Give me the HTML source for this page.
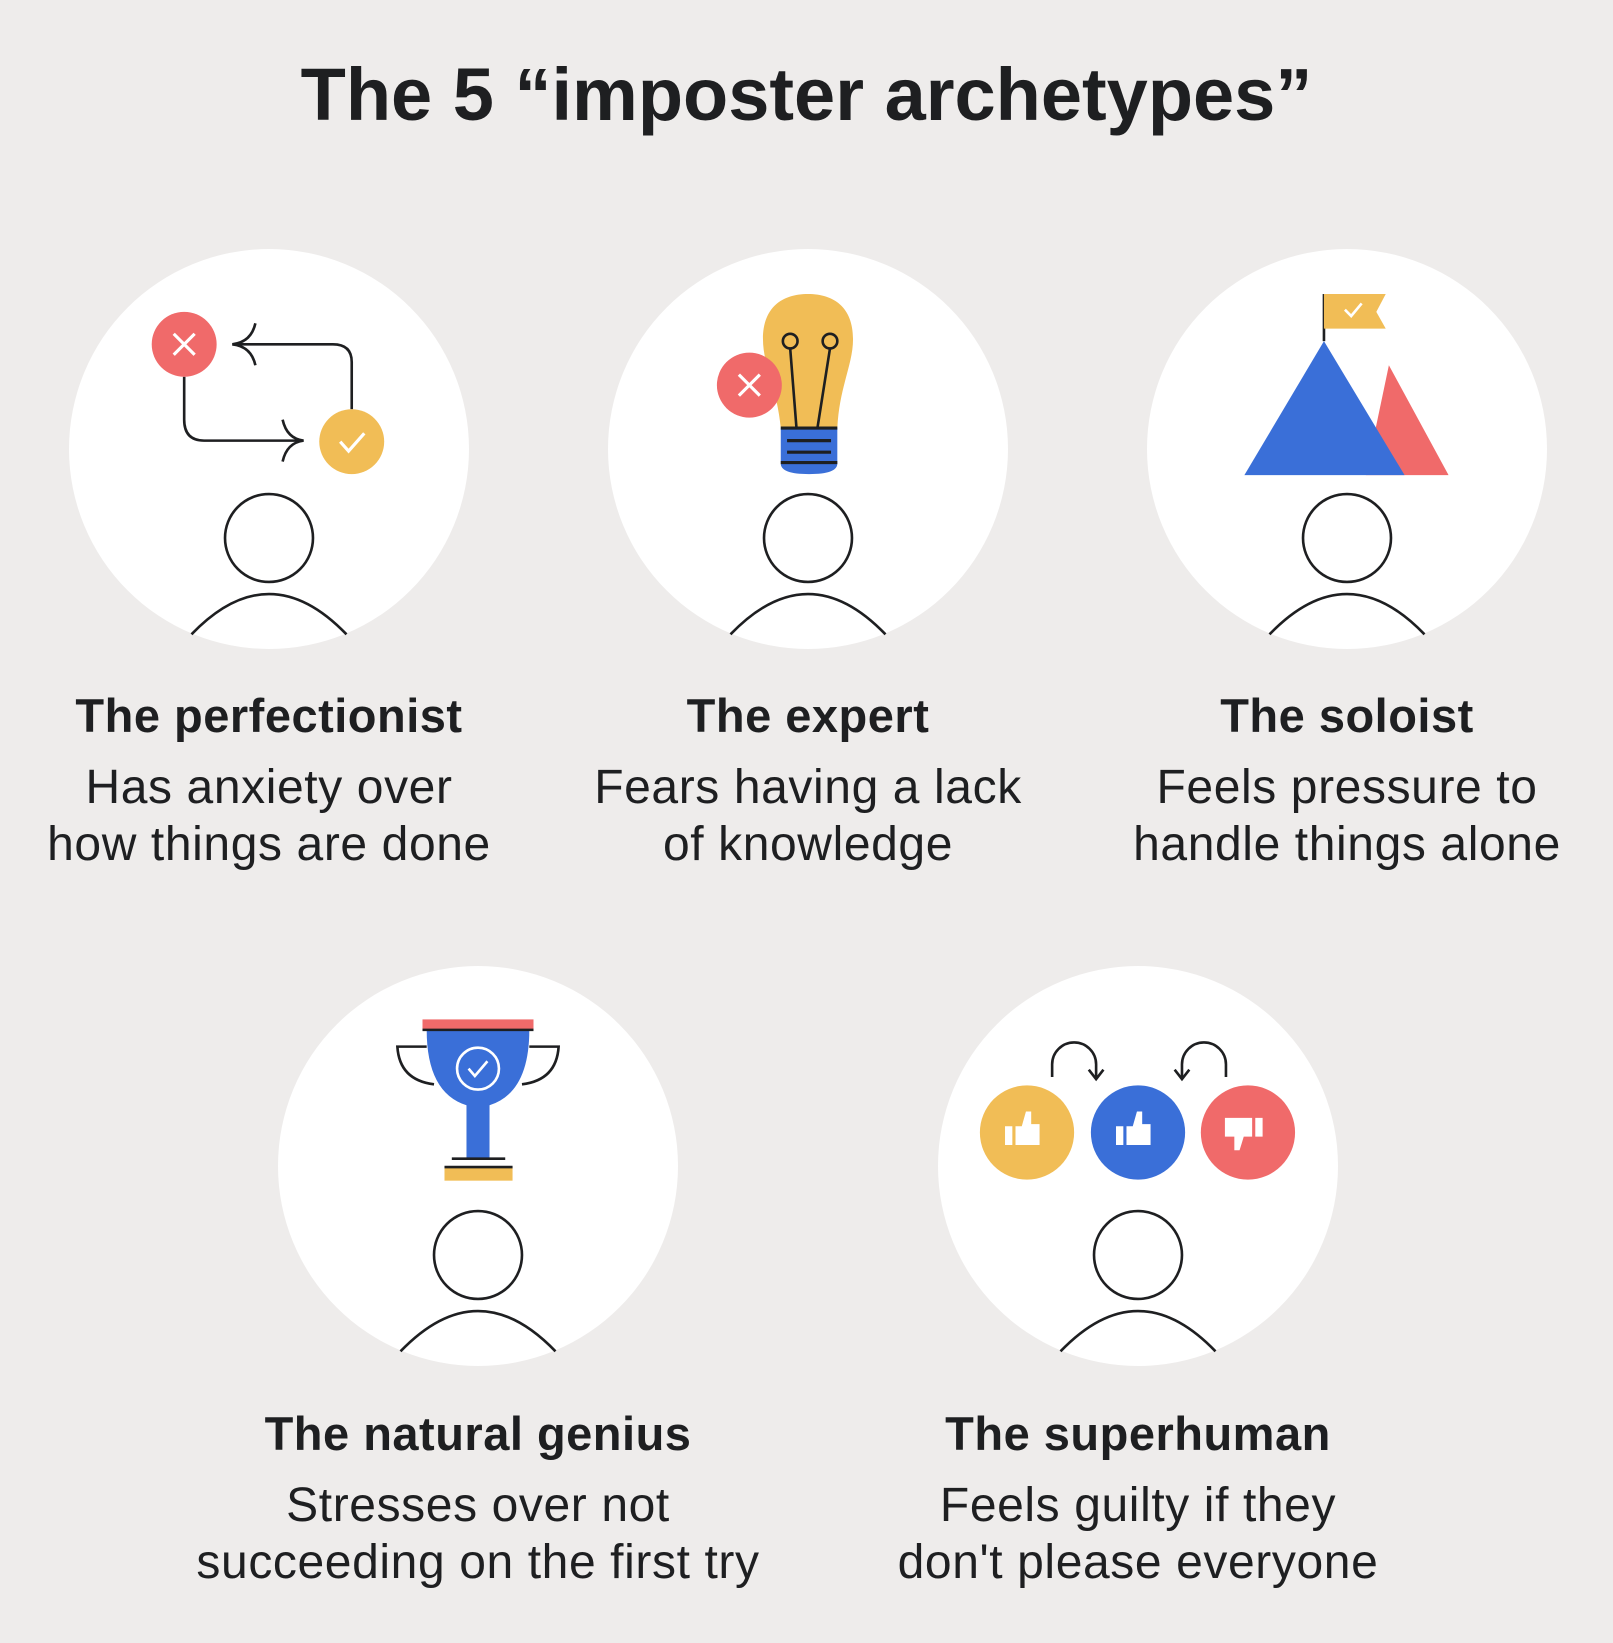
<!DOCTYPE html>
<html><head><meta charset="utf-8"><style>
*{margin:0;padding:0}
body{width:1613px;height:1643px;background:#eeeceb;position:relative;overflow:hidden;font-family:"Liberation Sans",sans-serif;color:#1e1f21}
.t{position:absolute;left:0;top:52px;width:1613px;text-align:center;font-size:74px;font-weight:bold;letter-spacing:0px}
svg.c{position:absolute;width:400px;height:400px}
.lab{position:absolute;width:600px;text-align:center}
.lab h2{font-size:47px;font-weight:bold;line-height:54px;height:70px;letter-spacing:0.5px}
.lab p{font-size:48px;line-height:57px;letter-spacing:0.6px}
</style></head><body>
<div class="t">The 5 “imposter archetypes”</div>

<svg class="c" style="left:69px;top:249px" viewBox="-191 -191 382 382">
<circle r="191" fill="#fff"/>
<g fill="none" stroke="#1e1f21" stroke-width="2.5">
<path d="M-81,-69 V-28 Q-81,-8 -62,-8 H33"/>
<path d="M13,-28 Q17,-10 33,-8 Q17,-6 13,12"/>
<path d="M79,-38 V-83 Q79,-100 61,-100 H-35"/>
<path d="M-13,-120 Q-17,-102 -35,-100 Q-17,-98 -13,-80"/>
</g>
<circle cx="-81" cy="-100" r="31" fill="#f06a6a"/>
<path d="M-91,-110 L-71,-90 M-71,-110 L-91,-90" stroke="#fff" stroke-width="3"/>
<circle cx="79" cy="-7" r="31" fill="#f1bd56"/>
<path d="M68,-7 L76,2 L91,-15" stroke="#fff" stroke-width="3" fill="none"/>
<g fill="none" stroke="#1e1f21" stroke-width="2.5"><circle cx="0" cy="85" r="42"/><path d="M-74,177 Q0,100 74,177"/></g>
</svg>

<svg class="c" style="left:608px;top:249px" viewBox="-191 -191 382 382">
<circle r="191" fill="#fff"/>
<path d="M-26,-20 C-30,-60 -43,-80 -43,-105 C-43,-135 -25,-148 0,-148 C25,-148 43,-135 43,-105 C43,-80 30,-60 28,-20 Z" fill="#f1bd56"/>
<path d="M-26,-20 H28 V14 Q28,24 1,24 Q-26,24 -26,14 Z" fill="#3a6fd8"/>
<path d="M-26,-20 H28 M-20,-8 H22 M-20,3 H22 M-26,13 H28" stroke="#1e1f21" stroke-width="3"/>
<g fill="none" stroke="#1e1f21" stroke-width="2.5"><circle cx="-17" cy="-103" r="7"/><circle cx="21" cy="-103" r="7"/><path d="M-17,-96 L-11,-20 M21,-96 L9,-20"/></g>
<circle cx="-56" cy="-61" r="31" fill="#f06a6a"/>
<path d="M-66,-71 L-46,-51 M-46,-71 L-66,-51" stroke="#fff" stroke-width="3"/>
<g fill="none" stroke="#1e1f21" stroke-width="2.5"><circle cx="0" cy="85" r="42"/><path d="M-74,177 Q0,100 74,177"/></g>
</svg>

<svg class="c" style="left:1147px;top:249px" viewBox="-191 -191 382 382">
<circle r="191" fill="#fff"/>
<path d="M40,-80 L97,25 H18 Z" fill="#f06a6a"/>
<path d="M-22,-103 L55,25 H-98 Z" fill="#3a6fd8"/>
<path d="M-22,-103 V-148" stroke="#1e1f21" stroke-width="2.5"/>
<path d="M-22,-148 H37 L28,-131 L37,-115 H-22 Z" fill="#f1bd56"/>
<path d="M-2,-133 L4,-127 L14,-139" stroke="#fff" stroke-width="2.5" fill="none"/>
<g fill="none" stroke="#1e1f21" stroke-width="2.5"><circle cx="0" cy="85" r="42"/><path d="M-74,177 Q0,100 74,177"/></g>
</svg>

<svg class="c" style="left:278px;top:966px" viewBox="-191 -191 382 382">
<circle r="191" fill="#fff"/>
<g fill="none" stroke="#1e1f21" stroke-width="2.5"><path d="M-49,-114 H-77 Q-75,-82 -42,-78"/><path d="M49,-114 H77 Q75,-82 42,-78"/></g>
<path d="M-49,-130 H49 Q49,-70 11,-58 V-8 H-11 V-58 Q-49,-70 -49,-130 Z" fill="#3a6fd8"/>
<rect x="-53" y="-140" width="106" height="10" fill="#f06a6a"/>
<path d="M-53,-130 H53" stroke="#1e1f21" stroke-width="2.5"/>
<rect x="-32" y="1" width="65" height="13" fill="#f1bd56"/>
<path d="M-25,-7 H26 M-32,1 H33" stroke="#1e1f21" stroke-width="2.5"/>
<circle cx="0" cy="-93" r="20" fill="none" stroke="#fff" stroke-width="2.5"/>
<path d="M-9,-93 L-3,-86 L9,-100" stroke="#fff" stroke-width="2.5" fill="none"/>
<g fill="none" stroke="#1e1f21" stroke-width="2.5"><circle cx="0" cy="85" r="42"/><path d="M-74,177 Q0,100 74,177"/></g>
</svg>

<svg class="c" style="left:938px;top:966px" viewBox="-191 -191 382 382">
<circle r="191" fill="#fff"/>
<g fill="none" stroke="#1e1f21" stroke-width="2.5">
<path d="M-82,-85 V-97 A21,21 0 0 1 -40,-97 V-85"/><path d="M-47,-92 L-40,-83 L-33,-92"/>
<path d="M84,-85 V-97 A21,21 0 0 0 42,-97 V-85"/><path d="M35,-92 L42,-83 L49,-92"/>
</g>
<circle cx="-106" cy="-32" r="45" fill="#f1bd56"/>
<circle cx="0" cy="-32" r="45" fill="#3a6fd8"/>
<circle cx="105" cy="-32" r="45" fill="#f06a6a"/>
<g fill="#fff">
<path d="M-127,-38 h7 v18 h-7z M-117,-38 h6 l4,-14 h5 v12 h8 v20 h-23z"/>
<path d="M-21,-38 h7 v18 h-7z M-11,-38 h6 l4,-14 h5 v12 h8 v20 h-23z"/>
<path d="M119,-46 h-7 v18 h7z M109,-46 h-6 l-4,0 h-16 v18 h9 v13 h5 l4,-13 h8z"/>
</g>
<g fill="none" stroke="#1e1f21" stroke-width="2.5"><circle cx="0" cy="85" r="42"/><path d="M-74,177 Q0,100 74,177"/></g>
</svg>

<div class="lab" style="left:-31px;top:689px"><h2>The perfectionist</h2><p>Has anxiety over<br>how things are done</p></div>
<div class="lab" style="left:508px;top:689px"><h2>The expert</h2><p>Fears having a lack<br>of knowledge</p></div>
<div class="lab" style="left:1047px;top:689px"><h2>The soloist</h2><p>Feels pressure to<br>handle things alone</p></div>
<div class="lab" style="left:178px;top:1407px"><h2>The natural genius</h2><p>Stresses over not<br>succeeding on the first try</p></div>
<div class="lab" style="left:838px;top:1407px"><h2>The superhuman</h2><p>Feels guilty if they<br>don't please everyone</p></div>
</body></html>
